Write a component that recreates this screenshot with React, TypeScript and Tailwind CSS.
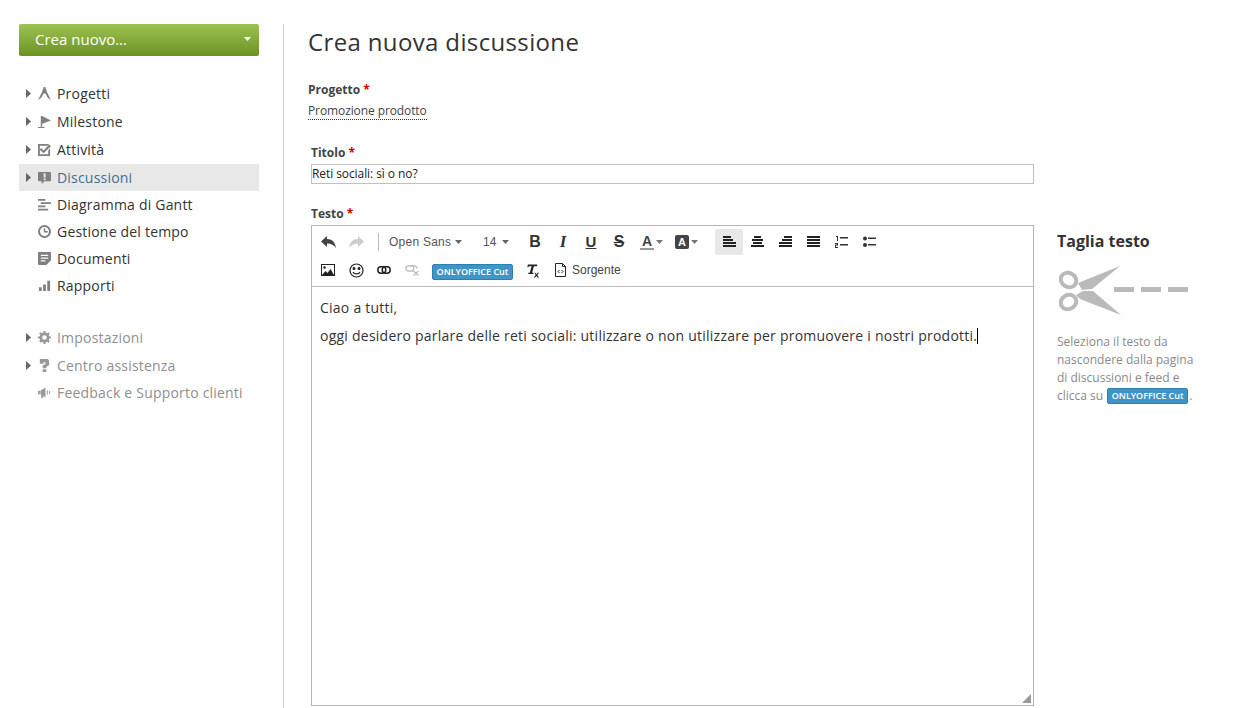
import type { ReactNode } from "react";

const Caret = ({ className = "" }: { className?: string }) => (
  <svg width="7" height="4" viewBox="0 0 7 4" className={`shrink-0 ${className}`}>
    <path d="M0 0h7L3.500 4z" fill="currentColor" />
  </svg>
);

const Arrow = () => (
  <svg width="5" height="9" viewBox="0 0 5 9" className="text-[#666]">
    <path d="M0 0l5 4.500L0 9z" fill="currentColor" />
  </svg>
);

const navIcons: Record<string, ReactNode> = {
  projects: <path d="M6 0h2l.6 2.800a2.600 2.600 0 0 1 .9 2.400L14 14l-3.500-2.500L8 7H6l-2.500 4.500L0 14 4.500 5.200a2.600 2.600 0 0 1 .9-2.400z" />,
  milestone: <path d="M3 1h1.500L14 6l-9.500 3.500V13H7v1H0v-1h3z" />,
  tasks: (
    <>
      <path fillRule="evenodd" d="M0 1h12l-2 2H2v9h9V8l2-2v8H0z" />
      <path d="M3.500 5.500l2.500 2.500L12 1.500 14 3.500 6 11 1.800 7z" />
    </>
  ),
  discussions: <path fillRule="evenodd" d="M1 1h12a1 1 0 0 1 1 1v8a1 1 0 0 1-1 1H7l-3 3v-3H1a1 1 0 0 1-1-1V2a1 1 0 0 1 1-1zm5 1.500v4.500h2.200V2.500zm0 5.500v2h2.200V8z" />,
  gantt: <path d="M0 1h8v2H0zM3 4.500h11v2H3zM0 8h8v2H0zM0 11.500h11v2H0z" />,
  time: <path fillRule="evenodd" d="M7 0a7 7 0 1 1 0 14A7 7 0 0 1 7 0zm0 2.200a4.800 4.800 0 1 0 0 9.600 4.800 4.800 0 0 0 0-9.600zM6.200 3.500h1.600V6.400H10.500V8H6.200z" />,
  docs: <path fillRule="evenodd" d="M1 0h12a1 1 0 0 1 1 1v8l-5 5H1a1 1 0 0 1-1-1V1a1 1 0 0 1 1-1zm2 3v1.300h8V3zm0 3v1.300h8V6zm0 3v1.300h5V9z" />,
  reports: <path d="M1 9h3v4H1zM5.500 6h3v7h-3zM10 2h3v11h-3z" />,
  settings: <path fillRule="evenodd" d="M6 0h2l.4 2 1.300.5L11.400 1.400l1.300 1.300-1.100 1.700.5 1.300 2 .4v1.800l-2 .4-.5 1.300 1.100 1.700-1.300 1.300-1.700-1.100-1.300.5-.4 2H6l-.4-2-1.300-.5-1.700 1.100-1.300-1.300 1.100-1.700-.5-1.300-2-.4V6.100l2-.4.5-1.300-1.100-1.700 1.300-1.300 1.700 1.100 1.300-.5zM7 4.500a2.500 2.500 0 1 0 0 5 2.500 2.500 0 0 0 0-5z" />,
  help: <path d="M2 0h8.500L12 1.500V6.500L9 8.500V10H5V7L8 5.500V3.500H6v1.500H2zM5 11h4v3H5z" />,
  feedback: <path d="M0 5h2v4H0zM2.500 5L8 1.500v11L2.500 9zM3.500 9.500h2v3.500h-2zM9.500 4.500h1v5h-1zM12 5.500h1v3h-1z" />,
};

type NavItem = { icon: string; label: string; arrow?: boolean; active?: boolean; h: string };

const mainNav: NavItem[] = [
  { icon: "projects", label: "Progetti", arrow: true, h: "h-[28px] pb-[2px]" },
  { icon: "milestone", label: "Milestone", arrow: true, h: "h-[28px] pb-[2px]" },
  { icon: "tasks", label: "Attività", arrow: true, h: "h-[28px] pb-[2px]" },
  { icon: "discussions", label: "Discussioni", arrow: true, active: true, h: "h-[27px]" },
  { icon: "gantt", label: "Diagramma di Gantt", h: "h-[27px]" },
  { icon: "time", label: "Gestione del tempo", h: "h-[27px]" },
  { icon: "docs", label: "Documenti", h: "h-[27px]" },
  { icon: "reports", label: "Rapporti", h: "h-[27px]" },
];

const bottomNav: NavItem[] = [
  { icon: "settings", label: "Impostazioni", arrow: true, h: "h-[28px] pb-[2px]" },
  { icon: "help", label: "Centro assistenza", arrow: true, h: "h-[27px]" },
  { icon: "feedback", label: "Feedback e Supporto clienti", h: "h-[27px]" },
];

const NavRow = ({ item, muted }: { item: NavItem; muted?: boolean }) => (
  <div className={`flex items-center ${item.h} ${item.active ? "bg-[#e8e8e8]" : ""}`}>
    <span className="flex w-[19px] justify-end pr-[7px]">{item.arrow && <Arrow />}</span>
    <span className="flex w-[14px] justify-start">
      <svg width="13" height="13" viewBox="0 0 14 14" fill="currentColor" className={muted ? "text-[#999]" : "text-[#808080]"}>
        {navIcons[item.icon]}
      </svg>
    </span>
    <span className={`ml-[5px] text-[14px] tracking-[0.2px] ${item.active ? "text-[#3c6f98]" : muted ? "text-[#8f8f8f]" : "text-[#333]"}`}>
      {item.label}
    </span>
  </div>
);

const Cell = ({ children, className = "" }: { children: ReactNode; className?: string }) => (
  <span className={`flex h-[26px] w-[28px] shrink-0 items-center justify-center rounded-[2px] text-[#333] ${className}`}>
    {children}
  </span>
);

const Lines = ({ rows }: { rows: [number, number][] }) => (
  <svg width="14" height="12" viewBox="0 0 14 12" fill="#222">
    {rows.map(([x, w], i) => (
      <rect key={i} x={x + 1} y={i * 3} width={w} height="2" />
    ))}
  </svg>
);

const CutButton = () => (
  <span className="inline-flex h-[16px] w-[81px] shrink-0 items-center justify-center rounded-[2px] border border-[#2f7fae] bg-[#3f95c7] font-['Open_Sans',sans-serif] text-[9px] font-semibold text-white">
    ONLYOFFICE Cut
  </span>
);

const Label = ({ children }: { children: ReactNode }) => (
  <div className="text-[12px] font-bold leading-[16px] text-[#444]">
    {children} <span className="text-[#c00]">*</span>
  </div>
);

const Toolbar = () => (
  <div className="h-[61px] border-b border-[#bbb] pl-[2px] pt-[3px] font-['Liberation_Sans',sans-serif]">
    <div className="flex h-[26px] items-center">
      <Cell>
        <svg width="15" height="12" viewBox="0 0 15 12" fill="#444"><path d="M6 0v3c5 0 8 3 9 9-2-3-5-4.500-9-4.500V11L0 5.500z" /></svg>
      </Cell>
      <Cell>
        <svg width="15" height="12" viewBox="0 0 15 12" fill="#ccc"><path d="M9 0v3c-5 0-8 3-9 9 2-3 5-4.500 9-4.500V11l6-5.500z" /></svg>
      </Cell>
      <span className="ml-[8px] h-[18px] w-px bg-[#bbb]" />
      <span className="ml-[10px] flex w-[73px] items-center gap-[4px] whitespace-nowrap text-[12px] tracking-[0.25px] text-[#555]">
        Open Sans <Caret className="text-[#666]" />
      </span>
      <span className="ml-[21px] flex w-[38px] items-center gap-[6px] text-[12px] text-[#555]">
        14 <Caret className="text-[#666]" />
      </span>
      <Cell><span className="text-[16px] font-bold">B</span></Cell>
      <Cell><span className="font-['Liberation_Serif',serif] text-[17px] font-bold italic">I</span></Cell>
      <Cell><span className="text-[15px] font-bold underline">U</span></Cell>
      <Cell><span className="text-[16px] font-bold line-through">S</span></Cell>
      <span className="flex w-[34px] items-center pl-[7px]">
        <span className="flex h-[16px] w-[14px] flex-col items-center border-b-[2px] border-[#999] text-[14px] font-bold leading-[14px] text-[#444]">A</span>
        <Caret className="ml-[2px] text-[#777]" />
      </span>
      <span className="flex w-[48px] items-center pl-[8px]">
        <span className="flex h-[14px] w-[14px] items-center justify-center rounded-[2px] bg-[#444] text-[11px] font-bold text-white">A</span>
        <Caret className="ml-[2px] text-[#777]" />
      </span>
      <Cell className="bg-[#e8e8e8]"><Lines rows={[[0, 8], [0, 10], [0, 13], [0, 13]]} /></Cell>
      <Cell><Lines rows={[[3, 7], [1, 11], [2, 9], [0, 13]]} /></Cell>
      <Cell><Lines rows={[[5, 8], [3, 10], [0, 13], [0, 13]]} /></Cell>
      <Cell><Lines rows={[[0, 13], [0, 13], [0, 13], [0, 13]]} /></Cell>
      <Cell>
        <svg width="13" height="12" viewBox="0 0 13 12" fill="#333">
          <path d="M1 0h2v5H2V1H1zM5 1h8v1.500H5zM5 8h8v1.500H5zM0 7h3v2.500H1V11h2v1H0V8.500h2V8H0z" />
        </svg>
      </Cell>
      <Cell>
        <svg width="13" height="12" viewBox="0 0 13 12" fill="#333">
          <circle cx="2" cy="2.500" r="2" /><circle cx="2" cy="9" r="2" />
          <path d="M5 1.500h8V3H5zM5 8h8v1.500H5z" />
        </svg>
      </Cell>
    </div>
    <div className="mt-[2px] flex h-[26px] items-center">
      <Cell>
        <svg width="14" height="12" viewBox="0 0 14 12">
          <rect x=".5" y=".5" width="13" height="11" fill="#fff" stroke="#222" />
          <circle cx="3.500" cy="3.500" r="1.300" fill="#222" />
          <path d="M1 11l3.500-4 2 2 3-4 3.500 6z" fill="#222" />
        </svg>
      </Cell>
      <Cell>
        <svg width="15" height="15" viewBox="0 0 15 15" fill="none" stroke="#222" strokeWidth="1.200">
          <circle cx="7.500" cy="7.500" r="6.500" />
          <circle cx="5" cy="5.500" r=".9" fill="#222" /><circle cx="10" cy="5.500" r=".9" fill="#222" />
          <path d="M4 9c1 2.500 6 2.500 7 0" />
        </svg>
      </Cell>
      <Cell>
        <svg width="14" height="8" viewBox="0 0 14 8" fill="none" stroke="#222" strokeWidth="1.500">
          <rect x=".8" y=".8" width="8" height="6.400" rx="3.200" />
          <rect x="5.200" y=".8" width="8" height="6.400" rx="3.200" />
        </svg>
      </Cell>
      <Cell>
        <svg width="14" height="11" viewBox="0 0 14 11" fill="none" stroke="#bbb" strokeWidth="1.300">
          <rect x=".8" y=".8" width="8" height="5.400" rx="2.700" />
          <path d="M5 .8h4a3 3 0 0 1 3 2.500M8.500 6l5 4.500M13.500 6l-5 4.500" />
        </svg>
      </Cell>
      <span className="ml-[6px]"><CutButton /></span>
      <span className="ml-[13px] flex w-[14px] justify-center">
        <svg width="15" height="15" viewBox="0 0 15 15" fill="#222">
          <path d="M2 1h10v2H8.500L6.500 10H8v1.200H2.500V10H4l2-7H3L2.500 4H1.500zM9 10l1 0 1.200 1.500L12.500 10h1.500l-2 2.300 2 2.700h-1.500l-1.300-1.700L9.800 15H8.300l2.100-2.700z" />
        </svg>
      </span>
      <span className="ml-[15px] flex items-center gap-[6px] text-[12px] text-[#444]">
        <svg width="11" height="14" viewBox="0 0 11 14" fill="none" stroke="#222">
          <path d="M.5.500h7l3 3v10H.5zM7.500.500v3h3" />
          <path d="M4.500 7L3 8.500 4.500 10M6.500 7L8 8.500 6.500 10" />
        </svg>
        Sorgente
      </span>
    </div>
  </div>
);

const Scissors = () => (
  <svg width="130" height="50" viewBox="0 0 130 50" fill="#bababa">
    <g fill="none" stroke="#bababa" strokeWidth="4">
      <ellipse cx="9.500" cy="14" rx="8" ry="7" transform="rotate(30 9.500 14)" />
      <ellipse cx="9.500" cy="36" rx="8" ry="7" transform="rotate(-30 9.500 36)" />
    </g>
    <path d="M61 0L19 17 23 24 33 23z" />
    <path d="M62 49L34 25 24 25 17 29 21 33z" />
    <path d="M55 21h20v5H55zM82 21h20v5H82zM109 21h20v5h-20z" />
  </svg>
);

export default function App() {
  return (
    <div className="flex h-[708px] overflow-hidden bg-white font-['Open_Sans',sans-serif] text-[#333]">
      <aside className="ml-[19px] mr-[24px] w-[240px] shrink-0 pt-[24px]">
        <button className="flex h-[32px] w-full items-center justify-between rounded-[2px] bg-gradient-to-b from-[#9cc353] to-[#6b9220] pb-[2px] pl-[16px] pr-[8px] text-[15px] text-white">
          Crea nuovo...
          <Caret />
        </button>
        <nav className="mt-[24px]">
          {mainNav.map((item) => (
            <NavRow key={item.label} item={item} />
          ))}
        </nav>
        <nav className="mt-[25px]">
          {bottomNav.map((item) => (
            <NavRow key={item.label} item={item} muted />
          ))}
        </nav>
      </aside>

      <main className="mt-[24px] min-w-0 flex-1 border-l border-[#d1d1d1] pl-[24px]">
        <h1 className="mt-[2px] text-[24px] leading-[32px] tracking-[0.36px] text-[#333]">Crea nuova discussione</h1>
        <div className="mt-[24px]">
          <Label>Progetto</Label>
          <div className="mt-[-1px]">
            <span className="inline-block border-b border-dotted border-[#333] text-[12px] leading-[17px] tracking-[-0.1px] text-[#444]">
              Promozione prodotto
            </span>
          </div>
        </div>
        <div className="ml-[3px] mt-[24px] flex">
          <div className="w-[723px] shrink-0">
            <Label>Titolo</Label>
            <div className="mt-[3px] flex h-[20px] items-center border border-[#c0c0c0] text-[12px] tracking-[-0.08px] text-[#222]">
              Reti sociali: sì o no?
            </div>
            <div className="mt-[22px]">
              <Label>Testo</Label>
            </div>
            <div className="relative mt-[3px] h-[481px] border border-[#b5b5b5]">
              <Toolbar />
              <div className="px-[8px] pt-[10px] text-[14px] leading-[22px] tracking-[0.24px] text-[#333]">
                <p>Ciao a tutti,</p>
                <p className="mt-[6px]">
                  oggi desidero parlare delle reti sociali: utilizzare o non utilizzare per promuovere i nostri prodotti.
                  <span className="inline-block h-[16px] w-px translate-y-[3px] bg-black" />
                </p>
              </div>
              <svg width="9" height="9" viewBox="0 0 9 9" className="absolute bottom-[2px] right-[2px]" fill="#999">
                <path d="M9 0v9H0z" />
              </svg>
            </div>
          </div>
          <aside className="ml-[23px] w-[145px] pt-[86px]">
            <h3 className="text-[16px] font-bold leading-[20px] text-[#333]">Taglia testo</h3>
            <div className="ml-[2px] mt-[15px]"><Scissors /></div>
            <div className="mt-[17px] text-[12px] leading-[18px] text-[#8a8a8a]">
              <p>Seleziona il testo da nascondere dalla pagina di discussioni e feed e</p>
              <div className="flex h-[18px] items-center gap-[4px] whitespace-nowrap">
                <span>clicca su</span>
                <CutButton />
                <span className="-ml-[3px]">.</span>
              </div>
            </div>
          </aside>
        </div>
      </main>
    </div>
  );
}
